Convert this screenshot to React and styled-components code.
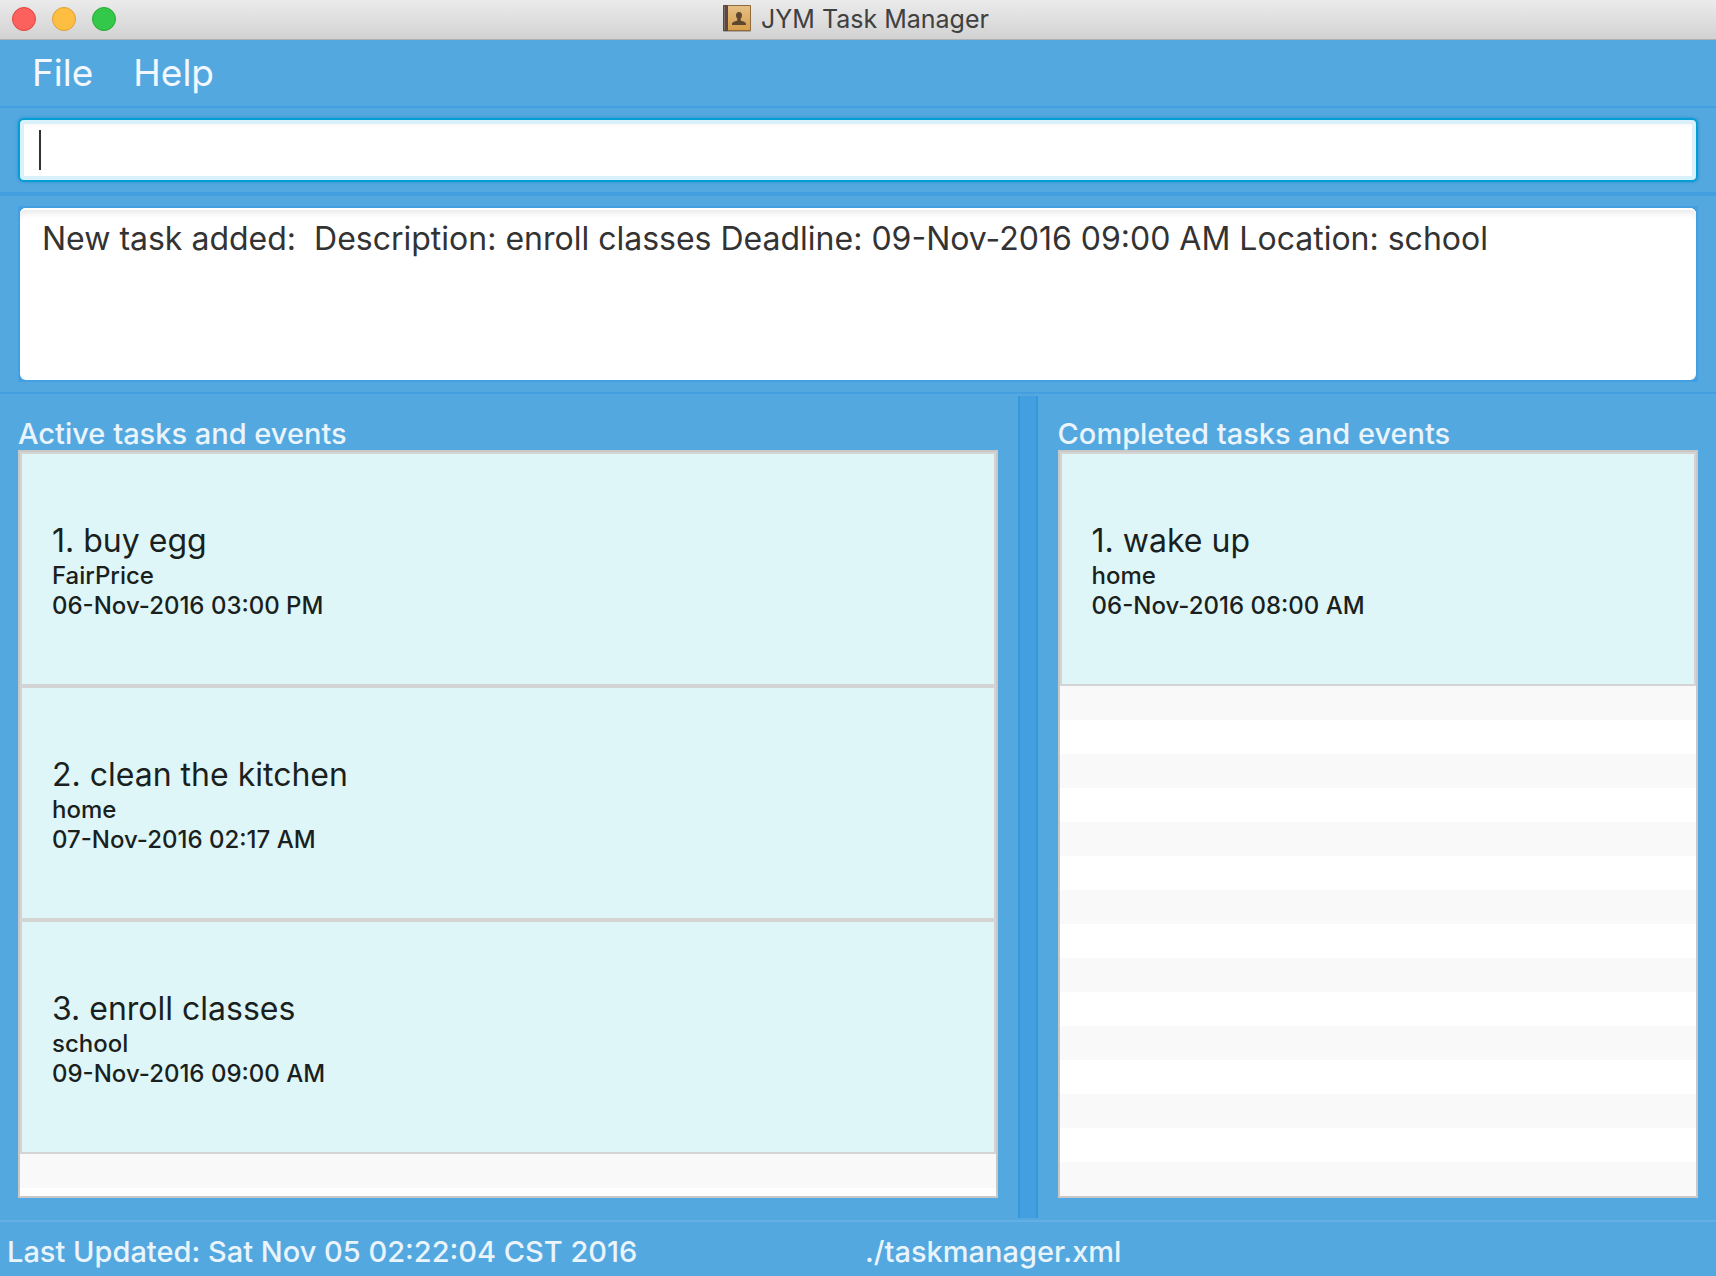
import React from 'react';
import styled, { createGlobalStyle } from 'styled-components';

const GlobalStyle = createGlobalStyle`
  * { box-sizing: border-box; }
  body {
    margin: 0;
    background: #54a8e0;
    font-family: Inter, "Liberation Sans", sans-serif;
  }
  button, input, textarea { font-family: inherit; }
`;

const Window = styled.div`
  display: flex;
  flex-direction: column;
  min-height: 100vh;
`;

const TitleBar = styled.header`
  display: flex;
  align-items: center;
  height: 40px;
  padding: 0 16px 2px 12px;
  background: linear-gradient(#ebebeb, #d2d2d2);
  border-bottom: 1px solid #acb0b3;
`;

const TitleSide = styled.div`
  flex: 1;
  display: flex;
  align-items: center;
  gap: 16px;
`;

const WindowButton = styled.button`
  width: 24px;
  height: 24px;
  padding: 0;
  border: 1px solid ${(p) => p.$edge};
  border-radius: 50%;
  background: ${(p) => p.$fill};
`;

const AppTitle = styled.h1`
  display: flex;
  align-items: center;
  gap: 10px;
  margin: 0;
  font-size: 25px;
  line-height: 30px;
  font-weight: 400;
  color: #404040;
`;

const MenuBar = styled.nav`
  display: flex;
  height: 68px;
  padding: 0 12px;
  border-bottom: 2px solid #439fe0;
`;

const MenuButton = styled.button`
  padding: 0 20px;
  border: 0;
  background: none;
  font-size: 37px;
  line-height: 64px;
  font-weight: 400;
  color: #f2f8fd;
`;

const InputArea = styled.div`
  display: flex;
  padding: 10px 18px;
  border-bottom: 4px solid #439fe0;
`;

const CommandInput = styled.input`
  flex: 1;
  min-width: 0;
  height: 64px;
  padding: 0 19px;
  border: 2px solid #039ed3;
  border-radius: 6px;
  outline: none;
  background: #fff;
  box-shadow: inset 0 0 0 4px #d9f1fa, inset 0 7px 3px -2px #f6f6f6, 0 0 3px 1px #3b9bd4;
  font-size: 32px;
  color: #333;

  &:placeholder-shown {
    caret-color: transparent;
    background: linear-gradient(#333, #333) 19px 10px / 2px 40px no-repeat #fff;
  }
`;

const ResultArea = styled.div`
  display: flex;
  padding: 10px 18px;
  border-bottom: 2px solid #439fe0;
`;

const ResultFrame = styled.div`
  display: flex;
  flex: 1;
  padding: 2px;
  background: #439fe0;
`;

const ResultText = styled.textarea`
  flex: 1;
  height: 172px;
  padding: 11px 22px;
  border: 0;
  border-radius: 6px;
  outline: none;
  resize: none;
  background: #fff;
  box-shadow: inset 0 2px 0 #fff, inset 0 8px 6px -3px #e9e9e9;
  font-size: 32px;
  line-height: 40px;
  color: #333;
`;

const SplitPane = styled.main`
  flex: 1;
  display: grid;
  grid-template-columns: 3fr 20px 2fr;
  padding: 2px 0;
`;

const Divider = styled.div`
  background: #439fe0;
  border: solid #3498db;
  border-width: 0 2px;
`;

const Panel = styled.section`
  display: flex;
  flex-direction: column;
  padding: 22px ${(p) => (p.$last ? 18 : 20)}px 20px ${(p) => (p.$last ? 20 : 18)}px;
`;

const PanelTitle = styled.h2`
  margin: 0;
  font-size: 29px;
  line-height: 32px;
  font-weight: 500;
  color: #e9f4fb;
`;

const List = styled.div`
  flex: 1;
  display: flex;
  flex-direction: column;
  border: 2px solid #c8c8c8;
  background: #fff;
`;

const Cards = styled.ol`
  margin: 0;
  padding: 0;
  list-style: none;
`;

const Card = styled.li`
  display: flex;
  flex-direction: column;
  justify-content: center;
  height: 234px;
  padding: 4px 30px 0;
  border: 2px solid #d4d4d4;
  background: #dff6f9;
  color: #1a1f20;
`;

const CardTitle = styled.h3`
  margin: 0;
  font-size: 32px;
  line-height: 40px;
  font-weight: 400;
`;

const CardLine = styled.p`
  margin: 0;
  font-size: 24px;
  line-height: 30px;
  font-weight: 500;
`;

const EmptyRows = styled.div`
  flex: 1;
  background: repeating-linear-gradient(#f9f9f9 0 34px, #fff 34px 68px);
`;

const StatusBar = styled.footer`
  display: grid;
  grid-template-columns: 1fr 1fr;
  padding: 10px 0 4px;
  border-top: 2px solid #64b0e4;
  font-size: 29px;
  line-height: 40px;
  font-weight: 500;
  color: #e9f4fb;
`;

const StatusText = styled.span`
  padding: 0 7px;
`;

const activeTasks = [
  { name: 'buy egg', place: 'FairPrice', time: '06-Nov-2016 03:00 PM' },
  { name: 'clean the kitchen', place: 'home', time: '07-Nov-2016 02:17 AM' },
  { name: 'enroll classes', place: 'school', time: '09-Nov-2016 09:00 AM' },
];

const completedTasks = [
  { name: 'wake up', place: 'home', time: '06-Nov-2016 08:00 AM' },
];

function BookIcon() {
  return (
    <svg width="28" height="27" viewBox="0 0 28 27" aria-hidden="true">
      <defs>
        <linearGradient id="cover" x1="0" y1="0" x2="0" y2="1">
          <stop offset="0" stopColor="#e5bf86" />
          <stop offset="1" stopColor="#d6a04c" />
        </linearGradient>
      </defs>
      <rect x="0" y="25" width="28" height="2" rx="1" fill="#aaa59d" />
      <rect x="0" y="0" width="28" height="26" rx="1" fill="#8e6a3c" />
      <rect x="5" y="1" width="22" height="24" fill="url(#cover)" />
      <rect x="0" y="0" width="5" height="26" rx="1" fill="#594742" />
      <rect x="1" y="1" width="1" height="24" fill="#806b64" />
      <path
        d="M16 7c-2 0-3 1.300-3 3.300 0 1.500.6 2.600 1.300 3.300v1.700c-.6 1.200-5.300 1-5.300 3.700v1h14v-1c0-2.700-4.700-2.500-5.300-3.700v-1.700c.7-.7 1.300-1.800 1.300-3.300C19 8.300 18 7 16 7z"
        fill="#5d4731"
      />
    </svg>
  );
}

function TaskPanel({ title, tasks, last }) {
  return (
    <Panel $last={last}>
      <PanelTitle>{title}</PanelTitle>
      <List>
        <Cards>
          {tasks.map((task, i) => (
            <Card key={task.name}>
              <CardTitle>{`${i + 1}. ${task.name}`}</CardTitle>
              <CardLine>{task.place}</CardLine>
              <CardLine>{task.time}</CardLine>
            </Card>
          ))}
        </Cards>
        <EmptyRows />
      </List>
    </Panel>
  );
}

export default function App() {
  return (
    <Window>
      <GlobalStyle />
      <TitleBar>
        <TitleSide>
          <WindowButton aria-label="Close" $fill="#fc615d" $edge="#e04440" />
          <WindowButton aria-label="Minimize" $fill="#fdbe41" $edge="#dfa033" />
          <WindowButton aria-label="Zoom" $fill="#34c84a" $edge="#27aa35" />
        </TitleSide>
        <AppTitle>
          <BookIcon />
          JYM Task Manager
        </AppTitle>
        <TitleSide />
      </TitleBar>
      <MenuBar>
        <MenuButton>File</MenuButton>
        <MenuButton>Help</MenuButton>
      </MenuBar>
      <InputArea>
        <CommandInput type="text" aria-label="Command" placeholder=" " />
      </InputArea>
      <ResultArea>
        <ResultFrame>
          <ResultText
            readOnly
            aria-label="Result"
            value="New task added:  Description: enroll classes Deadline: 09-Nov-2016 09:00 AM Location: school"
          />
        </ResultFrame>
      </ResultArea>
      <SplitPane>
        <TaskPanel title="Active tasks and events" tasks={activeTasks} />
        <Divider />
        <TaskPanel title="Completed tasks and events" tasks={completedTasks} last />
      </SplitPane>
      <StatusBar>
        <StatusText>Last Updated: Sat Nov 05 02:22:04 CST 2016</StatusText>
        <StatusText>./taskmanager.xml</StatusText>
      </StatusBar>
    </Window>
  );
}
